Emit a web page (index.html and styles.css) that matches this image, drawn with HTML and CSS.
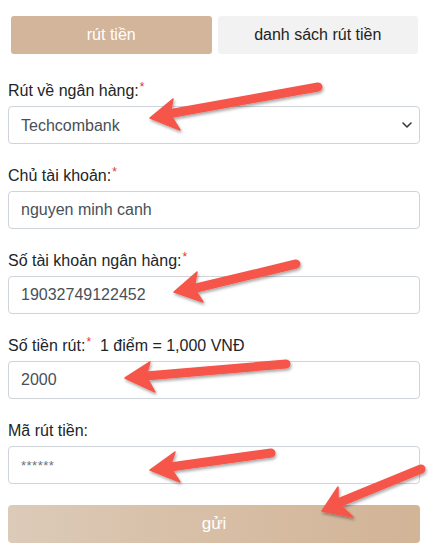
FILE: index.html
```html
<!DOCTYPE html>
<html lang="vi">
<head>
<meta charset="utf-8">
<title>rút tiền</title>
<link rel="stylesheet" href="styles.css">
</head>
<body>
<div class="page">
  <div class="tabs">
    <div class="tab tab-active">rút tiền</div>
    <div class="tab tab-plain">danh sách rút tiền</div>
  </div>
  <form class="form">
    <div class="group">
      <label class="label">Rút về ngân hàng:<span class="req">*</span></label>
      <div class="select-wrap">
        <select class="control select"><option>Techcombank</option></select>
        <svg class="chev" width="10" height="6" viewBox="0 0 10 6"><path d="M1 1l4 4 4-4" fill="none" stroke="#343a40" stroke-width="1.6" stroke-linecap="round" stroke-linejoin="round"/></svg>
      </div>
    </div>
    <div class="group">
      <label class="label">Chủ tài khoản:<span class="req">*</span></label>
      <input class="control" type="text" value="nguyen minh canh">
    </div>
    <div class="group">
      <label class="label">Số tài khoản ngân hàng:<span class="req">*</span></label>
      <input class="control" type="text" value="19032749122452">
    </div>
    <div class="group">
      <label class="label">Số tiền rút:<span class="req">*</span>&nbsp; 1 điểm = 1,000 VNĐ</label>
      <input class="control" type="text" value="2000">
    </div>
    <div class="group">
      <label class="label">Mã rút tiền:</label>
      <input class="control pw" type="text" value="******">
    </div>
    <button type="button" class="submit">gửi</button>
  </form>
</div>
<svg class="overlay" width="431" height="553" viewBox="0 0 431 553">
  <defs>
    <filter id="sh" x="-20%" y="-40%" width="140%" height="180%">
      <feDropShadow dx="1" dy="2" stdDeviation="1.6" flood-color="#000" flood-opacity="0.35"/>
    </filter>
  </defs>
  <g fill="#f5564a" stroke="#f5564a" filter="url(#sh)">
    <line x1="168" y1="114" x2="318" y2="87" stroke-width="9" stroke-linecap="round"/>
    <polygon points="150,118 173,99 170,114 180,130" stroke-width="1.5" stroke-linejoin="round"/>

    <line x1="192" y1="289" x2="296" y2="264" stroke-width="9" stroke-linecap="round"/>
    <polygon points="174,292 197,272 194,288 203,302" stroke-width="1.5" stroke-linejoin="round"/>

    <line x1="146" y1="376" x2="286" y2="364" stroke-width="9" stroke-linecap="round"/>
    <polygon points="125,378 150,362 146,376 155,392" stroke-width="1.5" stroke-linejoin="round"/>

    <line x1="170" y1="467" x2="271" y2="453" stroke-width="9" stroke-linecap="round"/>
    <polygon points="150,470 175,452 170,467 180,482" stroke-width="1.5" stroke-linejoin="round"/>

    <line x1="338" y1="503" x2="421" y2="469" stroke-width="9" stroke-linecap="round"/>
    <polygon points="322,511 338,487 338,503 353,517" stroke-width="1.5" stroke-linejoin="round"/>
  </g>
</svg>
</body>
</html>
```

FILE: styles.css
```css
* { box-sizing: border-box; }
html, body {
  margin: 0;
  padding: 0;
  background: #ffffff;
}
body {
  font-family: "Liberation Sans", Arial, Helvetica, sans-serif;
  font-size: 16px;
  color: #212529;
  width: 431px;
  height: 553px;
  overflow: hidden;
  position: relative;
}
.page {
  padding: 16px 11px 0 8px;
}
.tabs {
  display: flex;
  gap: 6px;
  padding: 0 2px 0 3px;
}
.tab {
  flex: 1 1 0;
  height: 38px;
  border-radius: 3px;
  display: flex;
  align-items: center;
  justify-content: center;
  font-size: 16px;
}
.tab-active {
  background: #d2b59b;
  color: #ffffff;
}
.tab-plain {
  background: #f2f2f2;
  color: #1e1e1e;
}
.form {
  margin-top: 25px;
  display: flex;
  flex-direction: column;
}
.group {
  display: flex;
  flex-direction: column;
  margin-bottom: 20px;
}
.label {
  line-height: 24px;
  margin-bottom: 3px;
  color: #212529;
}
.req {
  color: #e3342f;
  font-size: 12px;
  vertical-align: top;
  line-height: 16px;
  margin-left: 1px;
}
.control {
  width: 100%;
  height: 38px;
  border: 1px solid #ced4da;
  border-radius: 4px;
  padding: 0 12px;
  font-family: "Liberation Sans", Arial, Helvetica, sans-serif;
  font-size: 16px;
  color: #495057;
  background: #fff;
  outline: none;
}
.select-wrap {
  position: relative;
}
.select {
  appearance: none;
  -webkit-appearance: none;
}
.chev {
  position: absolute;
  right: 8px;
  top: 16px;
}
.pw {
  color: #6c757d;
  font-size: 13px;
  letter-spacing: 0.5px;
}
.submit {
  height: 38px;
  width: 100%;
  border: none;
  border-radius: 4px;
  background: linear-gradient(90deg, #dccbb9 0%, #d8c0a8 40%, #d2b497 100%);
  color: #ffffff;
  font-family: "Liberation Sans", Arial, Helvetica, sans-serif;
  font-size: 17px;
  margin-top: 1px;
}
.overlay {
  position: absolute;
  left: 0;
  top: 0;
  pointer-events: none;
}
```
